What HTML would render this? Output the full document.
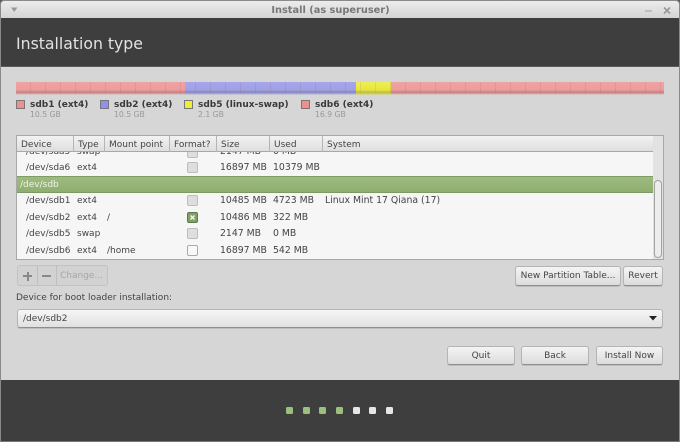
<!DOCTYPE html>
<html><head><meta charset="utf-8"><style>
html,body{margin:0;padding:0;background:#555}
body{width:680px;height:442px;position:relative;overflow:hidden;font-family:"DejaVu Sans",sans-serif;font-size:9px;color:#444;filter:blur(.25px)}
div,span{position:absolute;box-sizing:border-box}
.t{white-space:nowrap;line-height:12px}
.n{font-size:9.3px}
.b{background:linear-gradient(#f4f4f4,#dcdcdc);border:1px solid #b4b4b4;border-bottom:1px solid #8e8e8e;border-radius:3px;text-align:center;color:#444;line-height:19px;box-shadow:0 1px 0 #bdbdbd}
.h{top:136px;height:16px;border-right:1px solid #b5b5b5;padding-left:4px;line-height:18px;white-space:nowrap;color:#444}
.c{width:11px;height:11px;border:1px solid #bcbcbc;border-radius:2px;background:#dedede;left:187px}
.s{width:9px;height:9px;top:100px;border:1px solid #777}
.l{top:99px;font-weight:bold;color:#3a3a3a;font-size:9px}
.g{top:109px;color:#999;font-size:7.7px}
.d{width:7px;height:7px;top:406.5px;border-radius:1.5px;background:#9bc07e}
.seg{top:82px;height:13px}
</style></head><body>
<div style="left:0;top:0;width:680px;height:442px;background:#d6d6d6;border:1px solid #8a8a8a;border-bottom:0;border-radius:4px 4px 0 0"></div>
<div style="left:1px;top:1px;width:678px;height:17px;background:linear-gradient(#ececec,#d4d4d4);border-radius:4px 4px 0 0"></div>
<div class="t" style="left:0;width:661px;top:5px;text-align:center;font-weight:bold;color:#777;font-size:9.8px">Install (as superuser)</div>
<svg style="position:absolute;left:10px;top:7px" width="9" height="6"><path d="M1 0.5H7.5L4.2 5Z" fill="#999"/></svg>
<svg style="position:absolute;left:644px;top:6px" width="30" height="10"><path d="M1 5H8" stroke="#aaa" stroke-width="1.2"/><path d="M20 1.5L26 7.5M26 1.5L20 7.5" stroke="#999" stroke-width="1.6"/></svg>
<div style="left:1px;top:18px;width:678px;height:49px;background:#3e3e3e;border-bottom:1px solid #5a5a5a"></div>
<div class="t" style="left:16px;top:34px;font-size:15.7px;line-height:20px;color:#e2e2e2">Installation type</div>

<div class="seg" style="left:16px;width:169px;background:linear-gradient(#f0a3a3 0,#ec9d9d 60%,#c48080 80%,#d6d0d0 100%)"></div>
<div class="seg" style="left:185px;width:171px;background:linear-gradient(#a6a6ea 0,#a0a0e6 60%,#8686c2 80%,#cfcfd6 100%)"></div>
<div class="seg" style="left:356px;width:35px;background:linear-gradient(#eeee55 0,#e6e640 60%,#c0c038 80%,#d6d6b0 100%)"></div>
<div class="seg" style="left:391px;width:273px;background:linear-gradient(#f0a3a3 0,#ec9d9d 60%,#c48080 80%,#d6d0d0 100%)"></div>
<div class="seg" style="left:16px;width:648px;height:11px;background:repeating-linear-gradient(90deg,transparent 0,transparent 14px,rgba(120,60,60,.11) 14px,rgba(120,60,60,.11) 15px)"></div>

<div class="s" style="left:16px;background:#ef8f8f"></div><div class="t l" style="left:30px">sdb1 (ext4)</div><div class="t g" style="left:30px">10.5 GB</div>
<div class="s" style="left:100px;background:#9090ee"></div><div class="t l" style="left:114px">sdb2 (ext4)</div><div class="t g" style="left:114px">10.5 GB</div>
<div class="s" style="left:184px;background:#eeee33"></div><div class="t l" style="left:198px">sdb5 (linux-swap)</div><div class="t g" style="left:198px">2.1 GB</div>
<div class="s" style="left:301px;background:#ef8f8f"></div><div class="t l" style="left:315px">sdb6 (ext4)</div><div class="t g" style="left:315px">16.9 GB</div>

<div style="left:16px;top:135px;width:648px;height:125px;background:#f6f6f6;border:1px solid #a8a8a8"></div>
<div style="left:17px;top:136px;width:636px;height:16px;background:linear-gradient(#f2f2f2,#dedede);border-bottom:1px solid #a8a8a8"></div>
<div class="h" style="left:17px;width:57px">Device</div>
<div class="h" style="left:74px;width:31px">Type</div>
<div class="h" style="left:105px;width:65px">Mount point</div>
<div class="h" style="left:170px;width:47px">Format?</div>
<div class="h" style="left:217px;width:53px">Size</div>
<div class="h" style="left:270px;width:53px">Used</div>
<div class="h" style="left:323px;width:330px;border:0">System</div>

<div style="left:17px;top:152px;width:636px;height:107px;overflow:hidden">
  <div class="t" style="left:9px;top:-6px">/dev/sda5</div><div class="t" style="left:60px;top:-6px">swap</div><div class="c" style="left:170px;top:-5px"></div><div class="t n" style="left:203px;top:-6px">2147 MB</div><div class="t n" style="left:256px;top:-6px">0 MB</div>
  <div class="t" style="left:9px;top:10px">/dev/sda6</div><div class="t" style="left:60px;top:10px">ext4</div><div class="c" style="left:170px;top:10px"></div><div class="t n" style="left:203px;top:10px">16897 MB</div><div class="t n" style="left:256px;top:10px">10379 MB</div>
  <div style="left:0;top:24px;width:636px;height:17px;background:linear-gradient(#9dbb7f,#8eae70);border-top:1px solid #7f9b66;border-bottom:1px solid #7d9a64"></div>
  <div class="t" style="left:3px;top:27px;color:#eef3e8">/dev/sdb</div>
  <div class="t" style="left:9px;top:43px">/dev/sdb1</div><div class="t" style="left:60px;top:43px">ext4</div><div class="c" style="left:170px;top:43px"></div><div class="t n" style="left:203px;top:43px">10485 MB</div><div class="t n" style="left:256px;top:43px">4723 MB</div><div class="t n" style="left:308px;top:43px">Linux Mint 17 Qiana (17)</div>
  <div class="t" style="left:9px;top:60px">/dev/sdb2</div><div class="t" style="left:60px;top:60px">ext4</div><div class="t" style="left:90px;top:60px">/</div>
  <div class="c" style="left:170px;top:60px;background:#80a065;border-color:#5f7a4a"></div>
  <svg style="position:absolute;left:170px;top:60px" width="11" height="11"><path d="M3.5 3.5L7.5 7.5M7.5 3.5L3.5 7.5" stroke="#f2f6ee" stroke-width="1.5"/></svg>
  <div class="t n" style="left:203px;top:60px">10486 MB</div><div class="t n" style="left:256px;top:60px">322 MB</div>
  <div class="t" style="left:9px;top:76px">/dev/sdb5</div><div class="t" style="left:60px;top:76px">swap</div><div class="c" style="left:170px;top:76px"></div><div class="t n" style="left:203px;top:76px">2147 MB</div><div class="t n" style="left:256px;top:76px">0 MB</div>
  <div class="t" style="left:9px;top:93px">/dev/sdb6</div><div class="t" style="left:60px;top:93px">ext4</div><div class="t" style="left:90px;top:93px">/home</div><div class="c" style="left:170px;top:93px;background:#f8f8f8;border-color:#aaa"></div><div class="t n" style="left:203px;top:93px">16897 MB</div><div class="t n" style="left:256px;top:93px">542 MB</div>
</div>

<div style="left:653px;top:136px;width:10px;height:123px;background:#e2e2e2"></div>
<div style="left:654px;top:180px;width:8px;height:78px;background:#ededed;border:1px solid #a2a2a2;border-radius:4px"></div>

<div style="left:17px;top:265px;width:91px;height:21px;background:#d2d2d2;border:1px solid #c2c2c2;border-radius:3px"></div>
<div style="left:37px;top:266px;width:1px;height:19px;background:#bfbfbf"></div>
<div style="left:56px;top:266px;width:1px;height:19px;background:#bfbfbf"></div>
<div style="left:23px;top:275px;width:9px;height:2px;background:#888"></div>
<div style="left:26.5px;top:271.5px;width:2px;height:9px;background:#888"></div>
<div style="left:42px;top:275px;width:9px;height:2px;background:#888"></div>
<div class="t" style="left:60px;top:270px;color:#a6a6a6">Change...</div>

<div class="b" style="left:515px;top:266px;width:106px;height:20px">New Partition Table...</div>
<div class="b" style="left:623px;top:266px;width:40px;height:20px">Revert</div>

<div class="t" style="left:16px;top:292px">Device for boot loader installation:</div>
<div class="b" style="left:17px;top:309px;width:646px;height:19px;text-align:left;padding-left:5px;line-height:18px;background:linear-gradient(#f6f6f6,#e0e0e0)">/dev/sdb2</div>
<svg style="position:absolute;left:649px;top:316px" width="10" height="6"><path d="M0 0H8L4 4.5Z" fill="#222"/></svg>

<div class="b" style="left:447px;top:346px;width:68px;height:19px">Quit</div>
<div class="b" style="left:521px;top:346px;width:68px;height:19px">Back</div>
<div class="b" style="left:596px;top:346px;width:67px;height:19px">Install Now</div>

<div style="left:1px;top:380px;width:678px;height:61px;background:#3e3e3e"></div>
<div style="left:0;top:441px;width:680px;height:1px;background:#777"></div>
<div class="d" style="left:286px"></div><div class="d" style="left:303px"></div><div class="d" style="left:319px"></div><div class="d" style="left:336px"></div>
<div class="d" style="left:353px;background:#e6e6e6"></div><div class="d" style="left:369px;background:#e6e6e6"></div><div class="d" style="left:386px;background:#e6e6e6"></div>
</body></html>
